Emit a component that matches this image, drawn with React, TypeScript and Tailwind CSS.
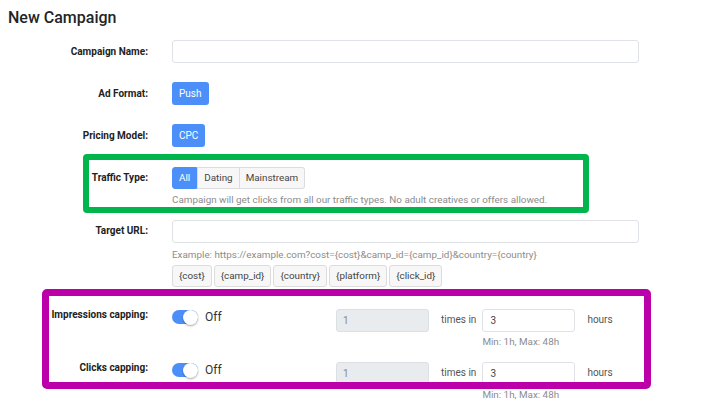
import React from "react";

const Label = ({ children, className = "" }: { children: React.ReactNode; className?: string }) => (
  <div className={`w-[148px] shrink-0 text-right text-[10px] leading-[14px] font-bold text-[#222] ${className}`}>
    {children}
  </div>
);

const Toggle = () => (
  <div className="flex items-center gap-[7px] mt-[0px]">
    <div className="w-[26px] h-[14px] rounded-full bg-[#4d8ff9] flex justify-end">
      <div className="w-[15px] h-[15px] -mt-[0.5px] rounded-full bg-white shadow-[0_1px_2px_rgba(0,0,0,0.35)]" />
    </div>
    <span className="text-[12px] leading-[16px] text-[#333]">Off</span>
  </div>
);

const CappingRow = ({ label }: { label: string }) => (
  <div className="flex items-start">
    <Label className="-mt-[1px]">{label}</Label>
    <div className="ml-6 w-[164px] shrink-0 pt-[0px]">
      <Toggle />
    </div>
    <input
      disabled
      defaultValue="1"
      className="w-[93px] h-[23px] rounded-[3px] border border-[#dcdfe3] bg-[#e9ecef] px-[6px] text-[10px] text-[#888]"
    />
    <span className="ml-3 mt-[4px] text-[10px] leading-[14px] text-[#555]">times in</span>
    <div className="ml-[6px] flex flex-col">
      <input
        defaultValue="3"
        className="w-[93px] h-[23px] rounded-[3px] border border-[#dfe2e6] bg-white px-[7px] text-[10px] text-[#444]"
      />
      <span className="mt-[3px] text-[9.85px] leading-[14px] text-[#8c8c8c]">Min: 1h, Max: 48h</span>
    </div>
    <span className="ml-3 mt-[4px] text-[10px] leading-[14px] text-[#555]">hours</span>
  </div>
);

export default function App() {
  const chips = ["{cost}", "{camp_id}", "{country}", "{platform}", "{click_id}"];

  return (
    <div className="relative w-[725px] h-[412px] overflow-hidden bg-white font-['Roboto','Liberation_Sans',sans-serif]">
      <h1 className="pl-2 pt-[6px] text-[16px] leading-[24px] font-medium text-[#212529]">New Campaign</h1>

      <div className="flex flex-col">
        <div className="mt-[10px] flex items-center">
          <Label>Campaign Name:</Label>
          <input className="ml-6 w-[467px] h-[23px] rounded-[3px] border border-[#dfe2e6] bg-white" />
        </div>

        <div className="mt-[19px] flex items-center">
          <Label>Ad Format:</Label>
          <button className="ml-6 h-[23px] px-[7px] rounded-[3px] bg-[#4d8ff9] text-[10px] text-white">Push</button>
        </div>

        <div className="mt-[19px] flex items-center">
          <Label>Pricing Model:</Label>
          <button className="ml-6 h-[23px] px-[7px] rounded-[3px] bg-[#4d8ff9] text-[10px] text-white">CPC</button>
        </div>

        {/* traffic type */}
        <div className="mt-[20px] flex items-start">
          <Label className="mt-[4px]">Traffic Type:</Label>
          <div className="ml-6 flex flex-col">
            <div className="flex">
              <button className="h-[22px] px-[6px] rounded-l-[3px] border border-[#4d8ff9] bg-[#4d8ff9] text-[9.85px] text-white">All</button>
              <button className="h-[22px] px-[6px] border border-[#dcdcdc] bg-[#f7f7f7] text-[9.85px] text-[#444]">Dating</button>
              <button className="h-[22px] px-[6px] rounded-r-[3px] border border-l-0 border-[#dcdcdc] bg-[#f7f7f7] text-[9.85px] text-[#444]">Mainstream</button>
            </div>
            <p className="mt-[4px] text-[9.85px] leading-[14px] text-[#8c8c8c]">
              Campaign will get clicks from all our traffic types. No adult creatives or offers allowed.
            </p>
          </div>
        </div>

        <div className="mt-[13px] flex items-start">
          <Label className="mt-[4px]">Target URL:</Label>
          <div className="ml-6 flex flex-col">
            <input className="w-[467px] h-[23px] rounded-[3px] border border-[#dfe2e6] bg-white" />
            <p className="mt-[5px] text-[9.85px] leading-[14px] text-[#8c8c8c]">
              Example: https://example.com?cost={"{cost}"}&amp;camp_id={"{camp_id}"}&amp;country={"{country}"}
            </p>
            <div className="mt-[3px] flex gap-[2px]">
              {chips.map((c) => (
                <span
                  key={c}
                  className="h-[22px] px-[6px] flex items-center rounded-[3px] border border-[#dcdcdc] bg-[#f7f7f7] text-[9.85px] text-[#444]"
                >
                  {c}
                </span>
              ))}
            </div>
          </div>
        </div>

        <div className="mt-[22px]">
          <CappingRow label="Impressions capping:" />
        </div>
        <div className="mt-[13px]">
          <CappingRow label="Clicks capping:" />
        </div>
      </div>

      {/* annotation frames */}
      <div className="absolute left-[83px] top-[154px] w-[506px] h-[59px] rounded-[4px] border-[6px] border-[#00b54c]" />
      <div className="absolute left-[42px] top-[289px] w-[609px] h-[100px] rounded-[5px] border-[7px] border-[#bb00aa]" />
    </div>
  );
}
